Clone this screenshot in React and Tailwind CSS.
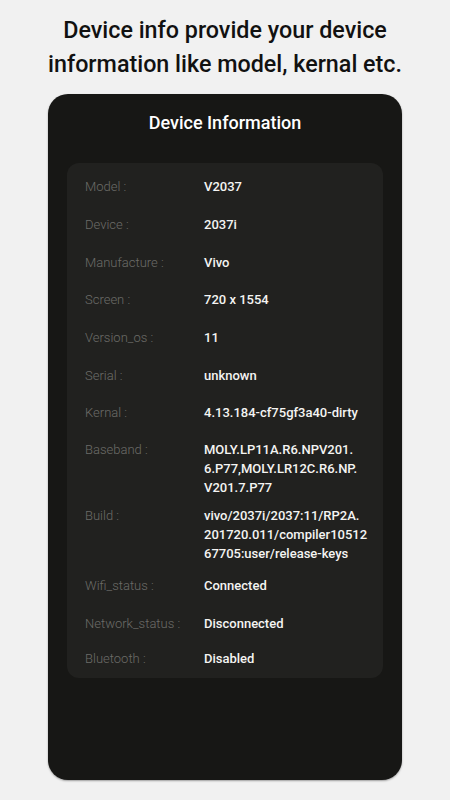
import React from "react";

const rows = [
  { label: "Model :", value: ["V2037"], mt: 0 },
  { label: "Device :", value: ["2037i"], mt: 19 },
  { label: "Manufacture :", value: ["Vivo"], mt: 19 },
  { label: "Screen :", value: ["720 x 1554"], mt: 18 },
  { label: "Version_os :", value: ["11"], mt: 19 },
  { label: "Serial :", value: ["unknown"], mt: 19 },
  { label: "Kernal :", value: ["4.13.184-cf75gf3a40-dirty"], mt: 18 },
  {
    label: "Baseband :",
    value: ["MOLY.LP11A.R6.NPV201.", "6.P77,MOLY.LR12C.R6.NP.", "V201.7.P77"],
    mt: 18,
  },
  {
    label: "Build :",
    value: ["vivo/2037i/2037:11/RP2A.", "201720.011/compiler10512", "67705:user/release-keys"],
    mt: 9,
  },
  { label: "Wifi_status :", value: ["Connected"], mt: 13 },
  { label: "Network_status :", value: ["Disconnected"], mt: 19 },
  { label: "Bluetooth :", value: ["Disabled"], mt: 16 },
];

function InfoRow({ label, value, mt }) {
  return (
    <div className="flex text-[13px] leading-[19px]" style={{ marginTop: mt }}>
      <div className="w-[119px] shrink-0 font-light text-[#6c6c68]">{label}</div>
      <div className="font-medium text-[#f4f4f2]">
        {value.map((line) => (
          <div key={line}>{line}</div>
        ))}
      </div>
    </div>
  );
}

export default function App() {
  return (
    <div
      className="w-[450px] h-[800px] bg-[#f1f1f1] overflow-hidden flex flex-col items-center"
      style={{ fontFamily: "Roboto, 'Noto Sans', sans-serif" }}
    >
      <h1 className="pt-[13px] text-center text-[23.3px] leading-[34px] text-[#111111] font-medium whitespace-nowrap">
        Device info provide your device
        <br />
        information like model, kernal etc.
      </h1>

      <div className="mt-[13px] w-[354px] h-[686px] rounded-[20px] bg-[#171715] pt-[17px] px-[19px] shadow-[0_1px_2px_rgba(0,0,0,0.35)]">
        <h2 className="text-center text-white text-[18px] leading-[24px] font-medium">
          Device Information
        </h2>

        <div className="mt-[28px] rounded-[12px] bg-[#21211f] pl-[18px] pr-[10px] pt-[14px] pb-[10px]">
          {rows.map((r) => (
            <InfoRow key={r.label} {...r} />
          ))}
        </div>
      </div>
    </div>
  );
}
